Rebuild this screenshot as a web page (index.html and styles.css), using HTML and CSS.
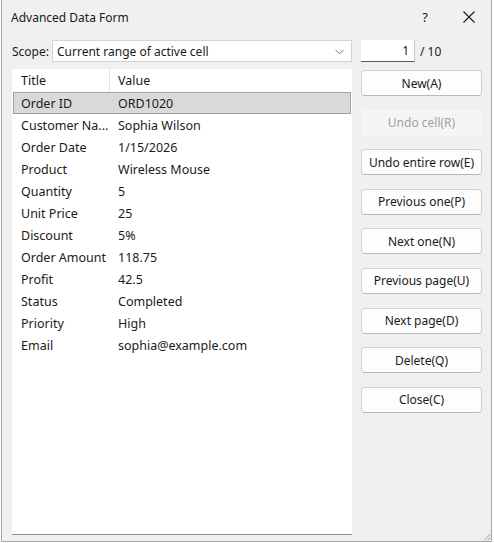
FILE: index.html
```html
<!DOCTYPE html>
<html>
<head>
<meta charset="utf-8">
<link rel="stylesheet" href="styles.css">
</head>
<body>
<div class="dialog">
  <div class="titlebar">
    <span class="title">Advanced Data Form</span>
    <span class="help">?</span>
    <svg class="close" width="12" height="12" viewBox="0 0 12 12"><path d="M0.5 0.5 L11.5 11.5 M11.5 0.5 L0.5 11.5" stroke="#1a1a1a" stroke-width="1.1" fill="none"/></svg>
  </div>
  <div class="scope-row">
    <span class="scope-label">Scope:</span>
    <div class="combo">
      <span>Current range of active cell</span>
      <svg class="chev" width="9" height="6" viewBox="0 0 9 6"><path d="M0.5 0.8 L4.5 4.8 L8.5 0.8" stroke="#707070" stroke-width="1" fill="none"/></svg>
    </div>
    <div class="numbox">1</div>
    <span class="total">/ 10</span>
  </div>
  <div class="main">
    <div class="list">
      <div class="row head"><span class="c1">Title</span><span class="c2">Value</span></div>
      <div class="row sel"><span class="c1">Order ID</span><span class="c2">ORD1020</span></div>
      <div class="row"><span class="c1">Customer Na...</span><span class="c2">Sophia Wilson</span></div>
      <div class="row"><span class="c1">Order Date</span><span class="c2">1/15/2026</span></div>
      <div class="row"><span class="c1">Product</span><span class="c2">Wireless Mouse</span></div>
      <div class="row"><span class="c1">Quantity</span><span class="c2">5</span></div>
      <div class="row"><span class="c1">Unit Price</span><span class="c2">25</span></div>
      <div class="row"><span class="c1">Discount</span><span class="c2">5%</span></div>
      <div class="row"><span class="c1">Order Amount</span><span class="c2">118.75</span></div>
      <div class="row"><span class="c1">Profit</span><span class="c2">42.5</span></div>
      <div class="row"><span class="c1">Status</span><span class="c2">Completed</span></div>
      <div class="row"><span class="c1">Priority</span><span class="c2">High</span></div>
      <div class="row"><span class="c1">Email</span><span class="c2">sophia@example.com</span></div>
    </div>
    <div class="buttons">
      <div class="btn">New(A)</div>
      <div class="btn disabled">Undo cell(R)</div>
      <div class="btn">Undo entire row(E)</div>
      <div class="btn">Previous one(P)</div>
      <div class="btn">Next one(N)</div>
      <div class="btn">Previous page(U)</div>
      <div class="btn">Next page(D)</div>
      <div class="btn">Delete(Q)</div>
      <div class="btn">Close(C)</div>
    </div>
  </div>
  <svg class="grip" width="8" height="8" viewBox="0 0 8 8"><path d="M7.5 1 L1 7.5 M7.5 4.5 L4.5 7.5" stroke="#9a9a9a" stroke-width="1" fill="none"/></svg>
</div>
</body>
</html>
```
FILE: styles.css
```css
html, body {
  margin: 0;
  padding: 0;
  background: #ffffff;
}
body {
  font-family: "Noto Sans", "Open Sans", sans-serif;
  font-size: 12px;
  color: #1a1a1a;
}
.dialog {
  position: relative;
  box-sizing: border-box;
  margin-left: 1px;
  width: 491px;
  height: 542px;
  background: #f0f0f0;
  border-left: 1px solid #a8a8a8;
  border-right: 1px solid #a8a8a8;
  border-bottom: 1px solid #a8a8a8;
}
.titlebar {
  height: 34px;
  display: flex;
  align-items: center;
  padding-left: 9px;
}
.title {
  font-size: 12px;
  flex: 1;
}
.help {
  font-size: 13px;
  margin-right: 35px;
}
.close {
  margin-right: 16px;
}
.scope-row {
  margin-top: 6px;
  height: 22px;
  display: flex;
  align-items: center;
  padding-left: 10px;
}
.scope-label {
  width: 40px;
}
.combo {
  box-sizing: border-box;
  width: 300px;
  height: 22px;
  background: #fff;
  border: 1px solid #d4d4d4;
  display: flex;
  align-items: center;
  justify-content: space-between;
  padding: 0 7px 0 4px;
}
.chev { margin-top: 1px; }
.numbox {
  box-sizing: border-box;
  margin-left: 9px;
  width: 54px;
  height: 22px;
  background: #fff;
  border-bottom: 1px solid #5a5a5a;
  border-right: 1px solid #c8c8c8;
  text-align: right;
  padding-right: 5px;
  line-height: 21px;
}
.total {
  margin-left: 5px;
}
.main {
  margin-top: 7px;
  display: flex;
  padding-left: 10px;
}
.list {
  box-sizing: border-box;
  width: 340px;
  height: 466px;
  background: #fff;
  border-bottom: 1px solid #8c8c8c;
  font-size: 12.5px;
}
.row {
  display: flex;
  height: 22px;
  align-items: center;
}
.row.head {
  height: 23px;
}
.row.head .c1 {
  border-right: 1px solid #e6e6e6;
  align-self: stretch;
  display: flex;
  align-items: center;
}
.c1 {
  box-sizing: border-box;
  flex: none;
  width: 98px;
  padding-left: 9px;
  white-space: nowrap;
}
.c2 {
  padding-left: 8px;
  white-space: nowrap;
}
.row.sel {
  box-sizing: border-box;
  margin-left: 1px;
  margin-right: 1px;
  background: #d9d9d9;
  border: 1px solid #a0a0a0;
}
.row.sel .c1 { width: 96px; padding-left: 7px; }
.buttons {
  margin-left: 9px;
  margin-top: 1px;
  width: 121px;
  display: flex;
  flex-direction: column;
  gap: 13.6px;
}
.btn {
  box-sizing: border-box;
  height: 26px;
  background: #fdfdfd;
  border: 1px solid #d0d0d0;
  border-bottom-color: #b8b8b8;
  border-radius: 4px;
  display: flex;
  align-items: center;
  justify-content: center;
  font-size: 12px;
}
.btn.disabled {
  background: #f5f5f5;
  border-color: #f5f5f5;
  color: #a0a0a0;
}
.grip {
  position: absolute;
  right: 0;
  bottom: 0;
}
```
